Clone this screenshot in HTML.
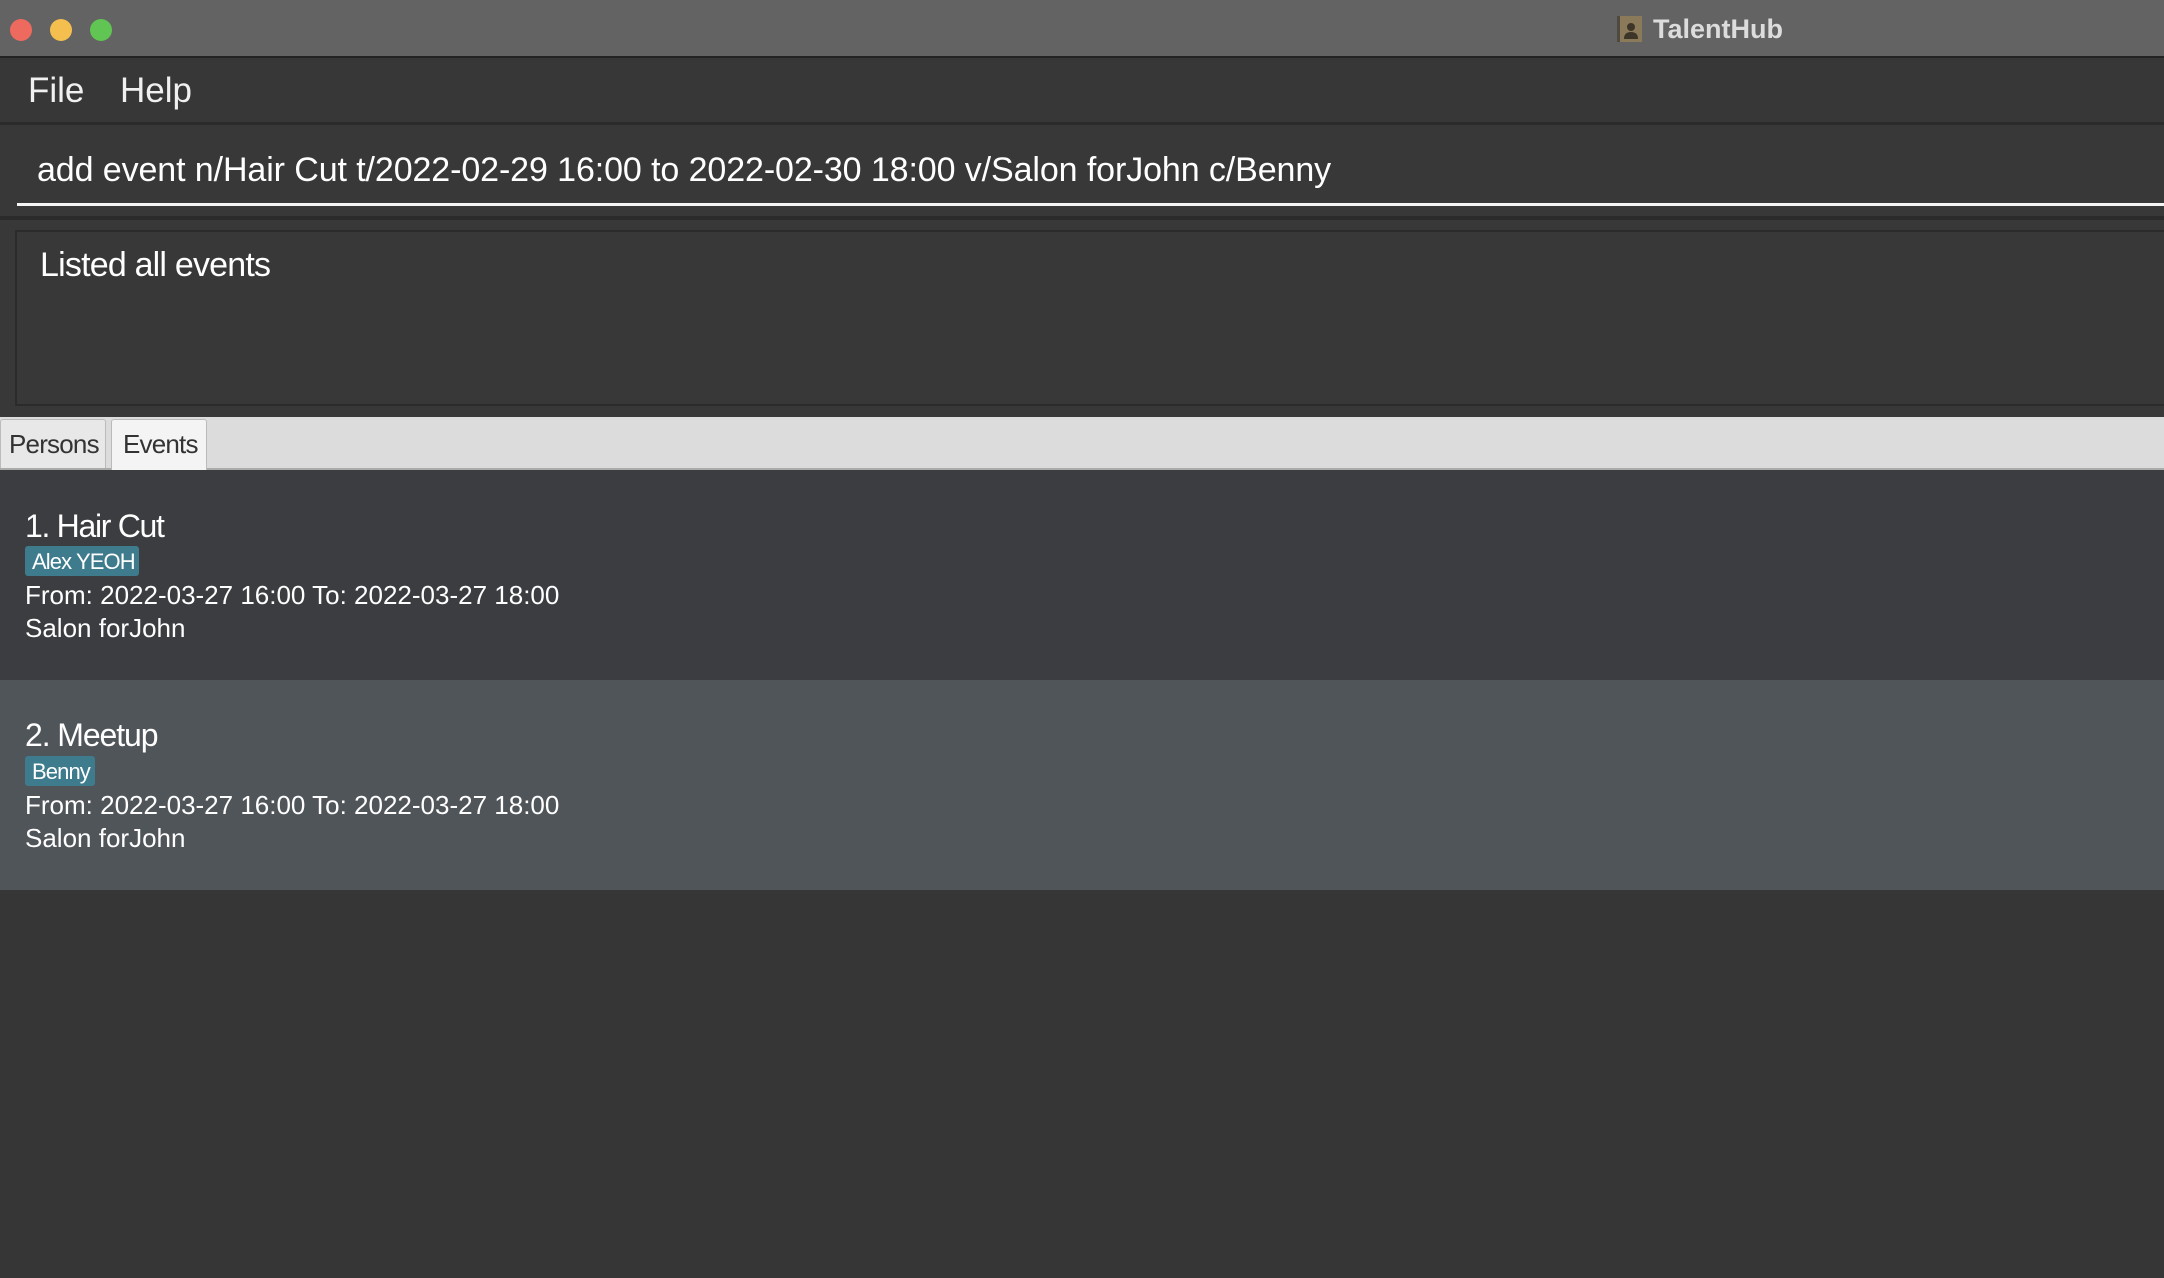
<!DOCTYPE html>
<html><head><style>
*{margin:0;padding:0;box-sizing:border-box}
body{width:2164px;height:1278px;background:#363636;font-family:"Liberation Sans",sans-serif;position:relative;overflow:hidden;color:#fff}
.a{position:absolute;white-space:nowrap}
.dot{position:absolute;top:19px;width:22px;height:22px;border-radius:50%}
</style></head><body>
<div class="a" style="left:0;top:0;width:2164px;height:58px;background:#636363;border-bottom:2px solid #222"></div>
<div class="dot" style="left:10px;background:#ee6a5f"></div>
<div class="dot" style="left:50px;background:#f5bf4f"></div>
<div class="dot" style="left:90px;background:#61c554"></div>
<div class="a" style="left:1617px;top:16px;width:25px;height:26px;background:#8a7a5a;border-left:3px solid #4f4a40"></div>
<svg class="a" style="left:1620px;top:20px" width="22" height="20" viewBox="0 0 22 20"><circle cx="11" cy="7" r="4" fill="#3d3528"/><path d="M4 19 Q4 12 11 12 Q18 12 18 19Z" fill="#3d3528"/></svg>
<div class="a" style="left:1653px;top:14px;font-size:27px;font-weight:bold;color:#dcdcdc">TalentHub</div>
<div class="a" style="left:0;top:60px;width:2164px;height:62px;background:#373737"></div>
<div class="a" style="left:28px;top:71px;font-size:35px;color:#f0f0f0">File</div>
<div class="a" style="left:120px;top:71px;font-size:35px;color:#f0f0f0">Help</div>
<div class="a" style="left:0;top:122px;width:2164px;height:3px;background:#2b2b2b"></div>
<div class="a" style="left:0;top:125px;width:2164px;height:91px;background:#383838"></div>
<div class="a" style="left:37px;top:151px;font-size:34px;letter-spacing:-0.1px;color:#fff">add event n/Hair Cut t/2022-02-29 16:00 to 2022-02-30 18:00 v/Salon forJohn c/Benny</div>
<div class="a" style="left:17px;top:203px;width:2147px;height:3px;background:#f5f5f5"></div>
<div class="a" style="left:0;top:216px;width:2164px;height:4px;background:#2b2b2b"></div>
<div class="a" style="left:0;top:220px;width:2164px;height:197px;background:#383838"></div>
<div class="a" style="left:15px;top:230px;width:2160px;height:176px;border:2px solid #2b2b2b;background:#383838"></div>
<div class="a" style="left:40px;top:246px;font-size:34px;letter-spacing:-0.8px;color:#fff">Listed all events</div>
<div class="a" style="left:0;top:417px;width:2164px;height:53px;background:#dcdcdc;border-bottom:2px solid #aaa"></div>
<div class="a" style="left:0;top:419px;width:106px;height:49px;background:#e8e8e8;border:1px solid #bbb;border-bottom:none;border-radius:3px 3px 0 0"></div>
<div class="a" style="left:9px;top:429px;font-size:26px;color:#333;letter-spacing:-0.8px">Persons</div>
<div class="a" style="left:111px;top:419px;width:96px;height:51px;background:#f4f4f4;border:1px solid #bbb;border-bottom:none;border-radius:3px 3px 0 0"></div>
<div class="a" style="left:123px;top:429px;font-size:26px;color:#333;letter-spacing:-0.8px">Events</div>
<div class="a" style="left:0;top:470px;width:2164px;height:210px;background:#3c3d40"></div>
<div class="a" style="left:0;top:680px;width:2164px;height:210px;background:#50555a"></div>
<div class="a" style="left:25px;top:508px;font-size:32px;letter-spacing:-1.3px;color:#fff">1. Hair Cut</div>
<div class="a" style="left:25px;top:546px;width:114px;height:30px;background:#3e7b8d;border-radius:3px"></div>
<div class="a" style="left:32px;top:549px;font-size:22px;letter-spacing:-0.9px;color:#fff">Alex YEOH</div>
<div class="a" style="left:25px;top:580px;font-size:26px;letter-spacing:0;color:#fff">From: 2022-03-27 16:00 To: 2022-03-27 18:00</div>
<div class="a" style="left:25px;top:613px;font-size:26px;letter-spacing:0;color:#fff">Salon forJohn</div>
<div class="a" style="left:25px;top:717px;font-size:32px;letter-spacing:-1.1px;color:#fff">2. Meetup</div>
<div class="a" style="left:25px;top:756px;width:70px;height:30px;background:#3e7b8d;border-radius:3px"></div>
<div class="a" style="left:32px;top:759px;font-size:22px;letter-spacing:-0.9px;color:#fff">Benny</div>
<div class="a" style="left:25px;top:790px;font-size:26px;letter-spacing:0;color:#fff">From: 2022-03-27 16:00 To: 2022-03-27 18:00</div>
<div class="a" style="left:25px;top:823px;font-size:26px;letter-spacing:0;color:#fff">Salon forJohn</div>
</body></html>
